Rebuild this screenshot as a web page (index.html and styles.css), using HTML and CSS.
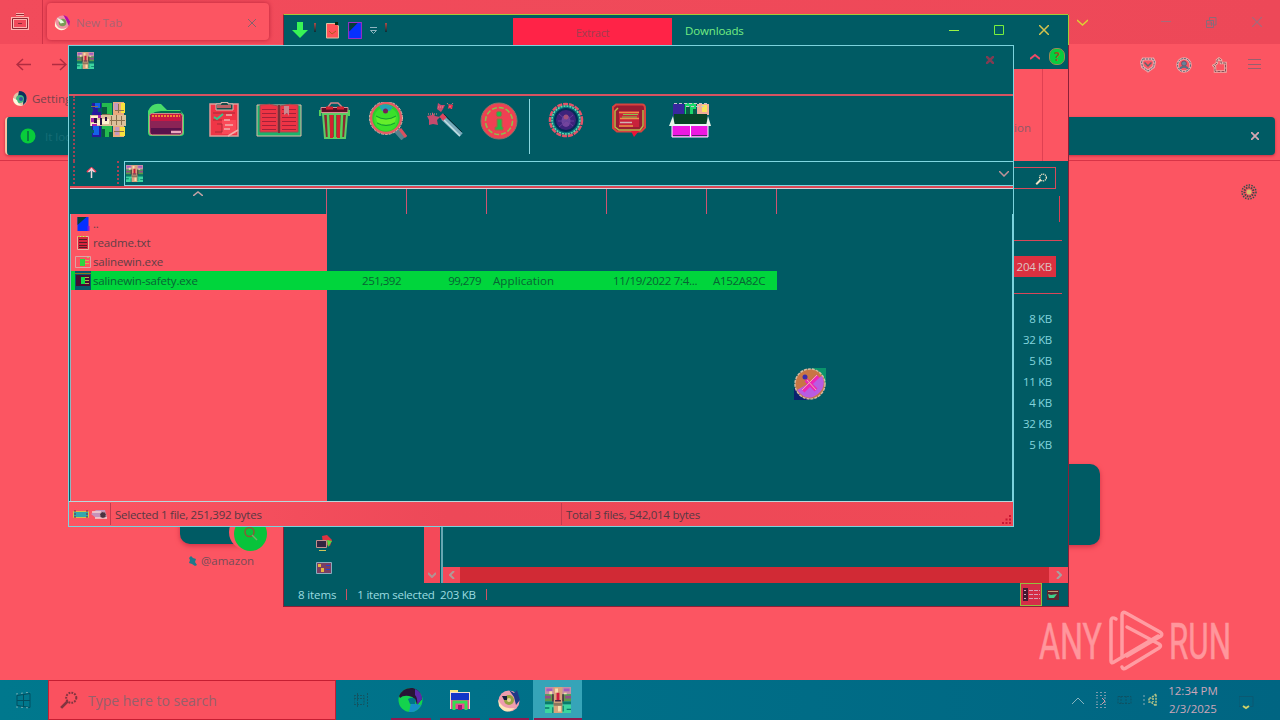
FILE: index.html
```html
<!DOCTYPE html>
<html lang="en">
  <head>
    <meta charset="UTF-8" />
    <meta name="viewport" content="width=device-width, initial-scale=1.0" />
    <title>Desktop</title>
    <link rel="stylesheet" href="styles.css">
  </head>
  <body>
    <svg class="defs" width="0" height="0">
      <symbol id="books" viewBox="0 0 18 18">
        <path fill="#c58fa5" d="M0 0h18v5H0z"/>
        <path fill="#a55ac0" d="M1 1h4v2H1zM13 1h4v2h-4z"/>
        <path fill="#5c9b48" d="M0 5h18v5H0z"/>
        <path fill="#934c8b" d="M0 6h4v2H0zM14 6h4v2h-4z"/>
        <path fill="#3dd69f" d="M0 12h18v6H0z"/>
        <path fill="#087a69" d="M0 10h18v2H0zM0 14h3v1H0zM5 14h1v4H5zM12 13h1v4h-1zM15 15h3v1h-3z"/>
        <path fill="#d9a27c" d="M6 0h6v18H6z"/>
        <path fill="#f6dcae" d="M7 1h2v3H7zM9 13h2v4H9zM3 3h2v2H3zM13 4h2v1h-2z"/>
        <path fill="#8b7760" d="M6 11h6v2H6z"/>
        <path fill="#ce183f" d="M8 4h2v5H8z"/>
        <path fill="#4a2445" d="M5 5h1v5H5zM12 5h1v5h-1zM7 9h4v1H7z"/>
      </symbol>
      <symbol id="fox" viewBox="0 0 18 18">
        <circle cx="9" cy="9" r="7.500" fill="#ef91a4"/>
        <path fill="#fff5da" d="M1 6c1 9 7 12 13 8-3 4-9 5-13-1z"/>
        <path fill="#b60ca6" d="M10 1l4 2 3 5-1 5-3-6z"/>
        <circle cx="9" cy="9" r="4" fill="#7b9b55"/>
        <path fill="#e5ffe0" d="M3 4l5 2 3 3-4 1z"/>
      </symbol>
      <symbol id="updir" viewBox="0 0 13 16">
        <path fill="#0630ff" d="M1 1h11v14H1z"/>
        <path fill="#084238" d="M1 1h9L1 9z"/>
        <path fill="#7e18e0" d="M11 10h2v5h-2z"/>
      </symbol>
      <symbol id="magnifier" viewBox="0 0 16 16">
        <circle cx="10" cy="6" r="4.500" fill="none" stroke="currentColor" stroke-width="1.800" stroke-dasharray="1.600 1"/>
        <path class="handle" stroke="currentColor" stroke-width="2.500" d="M7 9l-6 6"/>
      </symbol>
    </svg>

    <div class="desktop">
      <div class="browser">
        <div class="tab-strip">
          <div class="workspaces">
            <svg width="20" height="18" viewBox="0 0 20 18" fill="none">
              <path stroke="#ffb3b0" stroke-width="3" d="M6 1.500h8M2.500 5.500h15v10h-15z"/>
              <path stroke="#8d2833" d="M6 1.500h8M2.500 5.500h15v10h-15zM8 10.500h4"/>
            </svg>
          </div>
          <div class="tab">
            <svg width="17" height="17"><use href="#fox"/></svg>
            <span>New Tab</span>
            <svg class="tab-close" width="8" height="8" stroke="#86616b"><path d="M0 0l8 8M8 0L0 8"/></svg>
          </div>
          <div class="browser-controls">
            <svg class="list-tabs" width="11" height="7" fill="none" stroke="#ded034" stroke-width="1.500"><path d="M0 1l5.500 5L11 1"/></svg>
            <svg width="10" height="10" stroke="#a76b7a"><path d="M0 4.500h10"/></svg>
            <svg width="11" height="11" fill="none" stroke="#8b6a79"><path d="M.5 3.500h7v7h-7zM3.500 3V.5h6.500V8H8M3.500 5h2v4M1 7h6"/></svg>
            <svg width="10" height="10" stroke="#a26b7c" stroke-width="1.200"><path d="M0 0l10 10M10 0L0 10"/></svg>
          </div>
        </div>
        <div class="nav-bar">
          <svg width="15" height="13" fill="none" stroke="#b12c40" stroke-width="1.500"><path d="M15 6.500H1M7 1L1 6.500 7 12"/></svg>
          <svg class="forward" width="15" height="13" fill="none" stroke="#b12c40" stroke-width="1.500"><path d="M0 6.500h14M8 1l6 5.500L8 12"/></svg>
          <div class="nav-tools">
            <svg width="16" height="16" viewBox="0 0 16 16" fill="none"><path stroke="#eaa6aa" stroke-width="3" d="M3 2h10l1.500 3-1 5L8 14l-5.500-4-1-5z"/><path stroke="#566c76" stroke-dasharray="2 1" d="M3 2h10l1.500 3-1 5L8 14l-5.500-4-1-5z"/><path stroke="#60646d" stroke-width="1.500" d="M4.500 5.500L8 9l3.500-3.500"/></svg>
            <svg width="16" height="16" viewBox="0 0 16 16" fill="none"><circle cx="8" cy="8" r="6.500" stroke="#eba9aa" stroke-width="2.500"/><circle cx="8" cy="8" r="6.500" stroke="#536878" stroke-dasharray="2 1"/><circle cx="8" cy="6.500" r="2.500" fill="#63839a" stroke="#7a5268"/><path stroke="#5c6e83" stroke-width="2" d="M4 12c1-3 7-3 8 0"/></svg>
            <svg width="16" height="16" viewBox="0 0 16 16" fill="none"><path stroke="#e8b0a8" stroke-width="2.500" d="M3 14.500V10L1.500 8.500 4 7l1-1V3l2-1.500L9 3v3h4.500v8.500z"/><path stroke="#8a4e58" stroke-dasharray="3 1" d="M3 14.500V10L1.500 8.500 4 7l1-1V3l2-1.500L9 3v3h4.500v8.500z"/></svg>
            <svg width="13" height="11" stroke="#96606f"><path d="M0 .5h13M0 5.500h13M0 9.500h13"/></svg>
          </div>
        </div>
        <div class="bookmarks">
          <svg width="16" height="16" viewBox="0 0 16 16"><circle cx="8" cy="8" r="7" fill="#e3c3a6"/><path fill="#0c315d" d="M7 0c7 0 9 6 7 11l-3 3c1-6-1-8-5-9z"/><circle cx="8" cy="8" r="4" fill="#43b77f"/><path fill="#fff8dd" d="M1 7c0 5 4 9 10 7-4 0-5-2-6-5z"/><circle cx="9" cy="8" r="2" fill="#3556a0"/></svg>
          <span>Getting Started</span>
        </div>
        <div class="notice">
          <svg width="16" height="16"><circle cx="8" cy="8" r="7.500" fill="#08cc3b"/><path stroke="#076a43" stroke-width="1.500" d="M8 3v10"/></svg>
          <span>It looks like</span>
          <svg class="notice-close" width="8" height="8" stroke="#d4a7b2" stroke-width="1.800"><path d="M0 0l8 8M8 0L0 8"/></svg>
        </div>
        <div class="page">
          <svg class="settings" width="16" height="16" viewBox="0 0 16 16" fill="none"><circle cx="8" cy="8" r="7" stroke="#32504b" stroke-width="1.500" stroke-dasharray="1.500 1.200"/><circle cx="8" cy="8" r="4.500" stroke="#454545" stroke-width="2" stroke-dasharray="1.500 1"/><circle cx="8" cy="8" r="2.500" fill="#d7bd6c"/></svg>
          <div class="tile shortcut">
            <div class="tile-badge"><svg width="16" height="16" fill="none" stroke="#8a5a36" stroke-width="1.500"><circle cx="6.500" cy="6" r="4.500"/><path stroke="#7aa96c" d="M9 9l5 5"/></svg></div>
          </div>
          <div class="shortcut-label">
            <svg width="9" height="10"><path fill="#21798a" d="M3 0l2 2 3 1-1 3 2 3-2 1-3-2-3-1 1-3-1-2z"/></svg>
            <span>@amazon</span>
          </div>
          <div class="tile sponsor"></div>
        </div>
      </div>

      <div class="window explorer">
        <div class="explorer-title">
          <svg width="16" height="17" fill="#38f455"><path d="M5 0h6v8h5l-8 8-8-8h5z"/></svg>
          <i class="tick"></i>
          <svg class="quick-file" width="13" height="17"><path fill="#ff5257" stroke="#dfc3a0" d="M.5 1.500H10L12.500 4v12H.5z"/><path stroke="#b35a20" fill="none" d="M3 9l3 3 4-3"/><path fill="#08270f" d="M9 0h3v3H9z"/></svg>
          <svg class="quick-updir" width="14" height="17" viewBox="0 0 13 16"><path fill="#0630ff" stroke="#9c2ec5" d="M.5.500h12v15H.5z"/><path fill="#073c37" d="M1 1h8L1 9z"/></svg>
          <svg class="quick-more" width="7" height="7" fill="none" stroke="#8fb5c0"><path d="M0 .5h7M.5 3.500h6l-3 3z"/></svg>
          <i class="tick"></i>
          <div class="context-tab">Extract</div>
          <span class="explorer-name">Downloads</span>
          <div class="window-controls">
            <svg width="10" height="10" stroke="#9df444"><path d="M0 5.500h10"/></svg>
            <svg width="10" height="10" fill="none" stroke="#79ef3c"><path d="M.5.500h9v9h-9z"/></svg>
            <svg width="10" height="10" stroke="#d6c34c" stroke-width="1.500"><path d="M0 0l10 10M10 0L0 10"/></svg>
          </div>
        </div>
        <div class="ribbon-tabs">
          <svg width="10" height="8" fill="none" stroke="#ee4968" stroke-width="2"><path d="M0 6l5-4 5 4"/></svg>
          <div class="help">?</div>
        </div>
        <div class="ribbon"><span>Location</span></div>
        <div class="address-row">
          <div class="search-box"><svg width="13" height="12"><use href="#magnifier"/></svg></div>
        </div>
        <div class="explorer-body">
          <div class="nav-pane">
            <svg width="17" height="17"><path fill="#df3240" d="M6 1l5-1 5 5-2 6-7-2z"/><path fill="#52dc41" d="M11 5l5 1-4 6z"/><path fill="#332541" stroke="#c6908d" d="M.5 5.500h10v7H.5z"/><path stroke="#cfc55a" d="M3 15.500h7"/></svg>
            <svg width="16" height="12"><path fill="#7a3e62" stroke="#8cacbd" d="M.5.500h15v11H.5z"/><path fill="#e7b43e" d="M2 2h3v3H2zM5 6h3v4H5z"/><path stroke="#2740d0" d="M10 3.500h4M10 7.500h4"/></svg>
          </div>
          <div class="nav-scroll"><svg width="8" height="6" fill="none" stroke="#b29293" stroke-width="2"><path d="M0 1l4 4 4-4"/></svg></div>
          <div class="files">
            <div class="files-header"></div>
            <div class="group-line"></div>
            <div class="file selected">204 KB</div>
            <div class="group-line second"></div>
            <div class="file">8 KB</div>
            <div class="file">32 KB</div>
            <div class="file">5 KB</div>
            <div class="file">11 KB</div>
            <div class="file">4 KB</div>
            <div class="file">32 KB</div>
            <div class="file">5 KB</div>
            <div class="files-scroll">
              <div class="arrow"><svg width="6" height="8" fill="none" stroke="#b09a98" stroke-width="2"><path d="M5 0L1 4l4 4"/></svg></div>
              <div class="arrow right"><svg width="6" height="8" fill="none" stroke="#a7a0a0" stroke-width="2"><path d="M1 0l4 4-4 4"/></svg></div>
            </div>
          </div>
        </div>
        <div class="explorer-status">
          <span class="count">8 items</span>
          <i></i>
          <span class="chosen">1 item selected&nbsp; 203 KB</span>
          <i></i>
          <div class="views">
            <div class="view active"><svg width="17" height="13"><path fill="#441a32" d="M0 0h5v13H0z"/><path stroke="#d7a1bb" stroke-dasharray="4 1" d="M6 2.500h11M6 6.500h11M6 10.500h11M1 2.500h2M1 6.500h2M1 10.500h2"/></svg></div>
            <div class="view"><svg width="12" height="10"><path fill="#5c2530" d="M0 0h12v10H0z"/><path stroke="#bf9e74" d="M1 1.500h10"/><path fill="#3ed18b" d="M1 4l3 1 6-1-3 4H2z"/></svg></div>
          </div>
        </div>
      </div>

      <div class="window archive">
        <div class="archive-title">
          <svg width="17" height="17"><use href="#books"/></svg>
          <svg class="archive-close" width="8" height="8" stroke="#803c52" stroke-width="2.500"><path d="M0 0l8 8M8 0L0 8"/></svg>
        </div>
        <div class="tools">
          <svg width="36" height="36" viewBox="0 0 36 36"><path fill="#26189e" d="M2 1h9v34H2z"/><path fill="#1462e8" d="M5 1h5v5H5zM3 24h6v9H3z"/><path fill="#075a64" d="M1 6h2v4H1zM8 6h3v4H8zM1 28h3v3H1z"/><path fill="#24ba4e" d="M12 1h10v34H12z"/><path fill="#075a3e" d="M12 5h5v7h-5zM12 27h3v8h-3zM19 30h4v5h-4z"/><path fill="#e9a97d" d="M23 0h11v35H23z"/><path fill="#c49ac0" d="M24 1h5v7h-5zM25 25h4v8h-4z"/><path fill="#f9e23c" d="M31 1h4v10h-4zM30 25h5v9h-5z"/><path fill="#ddc09a" d="M0 13h36v11H0z"/><path fill="#fff2ce" d="M1 14h9v2H1zM7 18h3v5H7zM12 17h7v5h-7zM1 21h5v3H1z"/><path fill="#a821ae" d="M1 16h3v4H1zM8 13h3v3H8zM2 22h5v2H2z"/><path fill="#2c1245" d="M4 16h3v5H4zM10 16h2v7h-2zM15 15h2v4h-2z"/><path fill="none" stroke="#8a704f" d="M21.500 14v9M26.500 13v10M31.500 14v9M20 18.500h15M1 4.500h7M12 12.500h8M25 8.500h9M24 29.500h10M28.500 2v9"/></svg>
          <svg width="38" height="36" viewBox="0 0 38 36"><path fill="#49dc69" d="M1 9q4-9 13-7l6 6h13l4 5v18q0 3-4 3H4q-3 0-3-4z"/><path fill="#07694f" d="M14 9h20l1 4H3l5-3z"/><path fill="#8b2456" stroke="#d08b88" d="M2.500 13.500q0-2 3-2h27q3 0 3 3V30q0 3-3 3h-27q-3 0-3-3z"/><path fill="#c71844" d="M4 12h30v7H4z"/><path stroke="#ffb12b" stroke-width="1.500" stroke-dasharray="2 1" d="M5 14h28"/><path fill="#59124b" d="M4 26h30v6H4z"/><path stroke="#eda8be" stroke-width="2.500" d="M24 30h10"/></svg>
          <svg width="30" height="36" viewBox="0 0 30 36"><path fill="#ef3546" stroke="#df9c99" stroke-width="1.500" d="M1 2h28v32H1z"/><path fill="#fa4a58" d="M13 18h14v14H13z"/><path fill="#174c4b" stroke="#d4bbb2" d="M7 2h5V.5h7V2h5v6H7z"/><path fill="#ba6065" d="M8 3h14v3H8z"/><path fill="none" stroke="#a92b36" d="M4 11h22M4 18h9M8 22h5v8H6"/><path stroke="#36c78b" stroke-width="2" fill="none" d="M5 15l3 2 6-5"/><path stroke="#f1b0ac" stroke-width="1.500" d="M17 13h6M15 18h6M16 23h8M15 27h6M19 34l10-6"/></svg>
          <svg width="46" height="36" viewBox="0 0 46 36"><path fill="#19b36c" stroke="#e4bba5" d="M1 3h44v31H1z"/><path fill="#ee3445" stroke="#9a4c50" d="M4 3q10-2 18 1v26H4zM24 4q10-3 18-1v27H24z"/><path stroke="#a22239" fill="none" d="M6 7.500h14M6 11.500h14M6 15.500h14M6 19.500h14M6 23.500h14M6 27.500h14M26 7.500h14M26 11.500h14M26 15.500h14M26 19.500h14M26 23.500h14M26 27.500h14"/><path stroke="#77323a" stroke-width="2" d="M23 3v28"/><path fill="#ca8890" d="M28 4h5v10l-2-3-3 2z"/></svg>
          <svg width="31" height="38" viewBox="0 0 31 38"><path fill="none" stroke="#d28488" stroke-width="1.500" d="M9 5l3-4h7l4 4"/><path fill="#8a2730" stroke="#5ecb66" stroke-width="2" d="M4 12h24l-2 24H6z"/><path fill="#5b0e28" stroke="#da8e94" d="M2 5.500h27v5H2z"/><path stroke="#55d35a" stroke-width="2.500" d="M9 13l1 23M16 13v23M23 13l-1 23M1 8v6M30 8v6"/><path stroke="#d3212f" stroke-width="3" d="M12.500 13v23M19.500 13v23M7 6h7M18 6h7"/></svg>
          <svg width="38" height="38" viewBox="0 0 38 38"><path stroke="#58818e" stroke-width="7" d="M28 28l7 8"/><path stroke="#d9505f" stroke-width="3" d="M31 27l6 8"/><circle cx="17" cy="16" r="15" fill="#2acf2c" stroke="#e55b64" stroke-width="2.500"/><circle cx="17" cy="16" r="16.500" fill="none" stroke="#e6b4a6" stroke-dasharray="3 1"/><circle cx="17" cy="17" r="12" fill="#3be02a"/><path fill="#65ed2b" d="M7 15q10 5 20 0l-1 5q-9 5-18 0z"/><path fill="#23a2b5" d="M10 4q7-4 14 1l-3 4h-8z"/><circle cx="16.500" cy="9" r="2.500" fill="#781e58"/><path fill="none" stroke="#169a31" d="M7 14q10 6 20 0M8 21q9 5 18 0"/></svg>
          <svg width="38" height="36" viewBox="0 0 38 36"><path stroke="#7aaabb" stroke-width="5" d="M17 16l18 17"/><path stroke="#c1e0e3" stroke-width="1.500" d="M16 16l18 18"/><path stroke="#dc445d" stroke-width="5" d="M15 13l4 4"/><path stroke="#07323a" d="M18 12l18 18"/><path fill="#c64b6d" d="M6 10l3 4 5 1-3 3 1 5-5-1-4 1v-5l-2-4 5-1zM12 1l3 2h4l-2 4-2 3-4-3z"/><path fill="#ed284b" d="M23 2l4 1-1 4-4-1z"/><path stroke="#e98b89" stroke-dasharray="1 1" d="M21 1l5 6M27 1l-5 6M2 12h10M12 5h6"/></svg>
          <svg width="38" height="38" viewBox="0 0 38 38"><circle cx="19" cy="19" r="18" fill="#ef4053" stroke="#8d7364"/><circle cx="19" cy="19" r="13.500" fill="none" stroke="#8bc34c" stroke-width="1.500" stroke-dasharray="5 2"/><circle cx="19" cy="12" r="2.800" fill="#20b84c" stroke="#9d6b45"/><path fill="#24b748" stroke="#9d6b45" d="M17 17h5v8h1v3h-8v-3h2z"/></svg>
          <i class="tool-separator"></i>
          <svg width="36" height="36" viewBox="0 0 36 36"><circle cx="18" cy="18" r="16" fill="#06606a" stroke="#e35368" stroke-width="2.500" stroke-dasharray="5 1"/><circle cx="18" cy="18" r="14" fill="#06747c" stroke="#63ddb0" stroke-width="1.500" stroke-dasharray="2 1"/><circle cx="18" cy="18" r="11" fill="#3e237c" stroke="#052c58" stroke-width="2"/><ellipse cx="18" cy="19" rx="4.500" ry="6" fill="#73449d"/><path stroke="#63409a" d="M11 12l14 12M11 25l14-12M10 19h16"/><circle cx="18" cy="15" r="2.500" fill="#a3507c"/></svg>
          <svg width="36" height="36" viewBox="0 0 36 36"><path fill="#981c32" stroke="#d8423e" stroke-width="2" d="M5 2.500h26q3 0 3 4v19l-4 4H6L2 26V5z"/><path fill="none" stroke="#b3b848" stroke-width="1.500" d="M7 6L4 9v16l4 3h21l3-4V8"/><path fill="#c8213b" d="M8 9h20v16H8z"/><path stroke="#e89446" stroke-width="1.500" d="M8 10.500h20M9 16.500h19M8 24h14"/><path stroke="#86c34c" d="M12 12.500h15M11 15h15"/><path stroke="#d2b1b1" stroke-width="1.500" d="M9 20.500h12"/><path fill="#ee1438" d="M20 29h8l-5 6z"/></svg>
          <svg width="42" height="36" viewBox="0 0 42 36"><path fill="#38279e" d="M4 2h11v12H4z"/><path fill="#1ad76a" d="M16 1h11v12H16z"/><path fill="#f0ad99" d="M28 2h12v11H28z"/><path fill="#0c5c48" d="M17 5h4v8h-4zM24 7h3v6h-3z"/><path fill="#f7e55c" d="M33 3h5v7h-5z"/><path stroke="#c8c6ce" stroke-dasharray="3 2" d="M5 1.500h34M17 4.500h18"/><path fill="#074528" d="M5 12h33v10H5z"/><path fill="#ed18e2" stroke="#fff" d="M3 23h36v12H3z"/><path fill="#e9f4e8" d="M4 14L0 24h6zM39 14l3 10h-5z"/><path stroke="#e8f6f2" stroke-width="2" d="M4 23h34"/><path stroke="#fff" d="M21.500 23v12"/><path stroke="#54246b" d="M4 33.500h16M23 33.500h15"/></svg>
        </div>
        <div class="path-row">
          <div class="up"><svg width="11" height="11" fill="none"><path stroke="#e73d57" stroke-width="2" d="M1 5l4.500-4L10 5"/><path stroke="#efd6da" stroke-width="1.500" d="M5.500 1v10M2.500 5l3-3 3 3"/></svg></div>
          <div class="path-field">
            <svg width="17" height="17"><use href="#books"/></svg>
            <svg class="path-drop" width="10" height="6" fill="none" stroke="#c09298" stroke-width="1.500"><path d="M0 0l5 5 5-5"/></svg>
          </div>
        </div>
        <div class="columns">
          <div><svg width="10" height="5" fill="none" stroke="#c1a2a5" stroke-width="1.500"><path d="M0 5l5-4 5 4"/></svg></div>
          <div></div><div></div><div></div><div></div><div></div>
        </div>
        <div class="entries">
          <div class="entry">
            <svg width="14" height="16"><use href="#updir"/></svg><span>..</span>
          </div>
          <div class="entry">
            <svg width="14" height="16"><path fill="#d8243b" stroke="#e8b5a2" d="M1.500 1.500h11v13h-11z"/><path stroke="#571e28" d="M3 4.500h8M3 7.500h8M3 10.500h8M3 12.500h8"/><path stroke="#c8c72c" stroke-dasharray="2 1" d="M2 1.500h9"/></svg><span>readme.txt</span>
          </div>
          <div class="entry">
            <svg width="16" height="12"><path fill="#fa5360" stroke="#dca4a4" d="M.5.500h15v11H.5z"/><path fill="#2cd63e" d="M5 3h5v7H5z"/><path stroke="#bdbb4f" d="M10 4.500h4M10 7.500h4M12 1.500h2"/></svg><span>salinewin.exe</span>
          </div>
          <div class="entry selected">
            <div class="entry-name"><svg width="16" height="19"><path fill="#07596a" d="M0 0h16v19H0z"/><path stroke="#8b7620" d="M0 2.500h16"/><path fill="#470c33" d="M1 4h14v11H1z"/><path fill="#0ce045" d="M6 6h4v7H6z"/><path stroke="#a7b849" d="M10 6.500h4M10 9.500h4M10 12.500h4"/></svg><span>salinewin-safety.exe</span></div>
            <span class="num">251,392</span>
            <span class="num">99,279</span>
            <span class="kind">Application</span>
            <span>11/19/2022 7:4...</span>
            <span>A152A82C</span>
          </div>
        </div>
        <div class="archive-status">
          <div class="status-icons">
            <svg width="16" height="9"><path fill="#35a7ac" stroke="#d7bf4a" d="M.5 1.500h15v6H.5z"/><path stroke="#742344" stroke-dasharray="2 1" d="M2 0v9M14 0v9"/></svg>
            <svg width="17" height="11"><path fill="#c792ba" d="M0 5l5-4h9l2 8H5z"/><path stroke="#f6d1cf" stroke-width="1.500" d="M1 3h9M4 9h12"/><circle cx="12" cy="6" r="3" fill="#4b3340" stroke="#bd9d9c" stroke-dasharray="1 1"/></svg>
          </div>
          <span>Selected 1 file, 251,392 bytes</span>
          <span>Total 3 files, 542,014 bytes</span>
          <svg class="grip" width="9" height="9" fill="#c91733"><path d="M0 7h2v2H0zM3.500 7h2v2h-2zM7 7h2v2H7zM3.500 3.500h2v2h-2zM7 3.500h2v2H7zM7 0h2v2H7z"/></svg>
        </div>
      </div>

      <svg class="busy" width="32" height="32" viewBox="0 0 32 32"><path fill="#0a216f" d="M0 20h15v12H0z"/><path fill="#0b946b" d="M18 0h14v16H18z"/><circle cx="16" cy="16" r="15" fill="#c87645" stroke="#d5b9a1" stroke-width="1.500" stroke-dasharray="3 1"/><path fill="#b85ce2" d="M3 22L28 8q5 10-4 18-11 9-21-4z"/><path stroke="#ed27b6" stroke-width="4" d="M9 23L24 8M12 12l10 10"/><path stroke="#eab1ac" d="M8 22L23 7M13 12l9 10"/><circle cx="11" cy="9" r="2.500" fill="#3a2bad"/></svg>

      <svg class="watermark" width="210" height="64" viewBox="0 0 210 64">
        <text x="1" y="49" textLength="63" lengthAdjust="spacingAndGlyphs">ANY</text>
        <g fill="none" stroke="#ff9ca2" stroke-width="3.500" stroke-linejoin="round" stroke-linecap="round">
          <path d="M78 9q-5-3-5 2v40q0 3 3 1l44-26"/>
          <path d="M84 46V5q0-4 4-2l34 19q3 2 1 4L89 46"/>
          <path d="M89 17l32 17q3 2 0 4L88 58q-3 2-4-1"/>
        </g>
        <text x="131" y="49" textLength="62" lengthAdjust="spacingAndGlyphs">RUN</text>
      </svg>

      <div class="taskbar">
        <div class="start"><svg width="15" height="17" fill="none"><path stroke="#024f60" d="M1 3.500l13-2v14L1 13.500zM7.500 2v13M1 8.500h13"/><path stroke="#72aab0" stroke-dasharray="2 3" d="M0 2l15-2M0 15l15 1"/></svg></div>
        <div class="task-search"><svg width="18" height="18"><use href="#magnifier"/></svg><span>Type here to search</span></div>
        <div class="task task-view"><svg width="15" height="14" fill="none" stroke="#125462"><path stroke-dasharray="2 1" d="M0 2.500h10v9H0zM13.500 0v14M0 5.500h10M3.500 0v14"/></svg></div>
        <div class="task running"><svg width="25" height="26" viewBox="0 0 25 26"><circle cx="12.500" cy="13" r="12" fill="#14d34d"/><path fill="#291436" d="M1 9Q5 0 15 1q8 2 9 11l-5 6q-1-8-8-9-6-1-9 2z"/><path fill="#5a29ab" d="M17 2q7 3 7 10l-5 6q1-7-2-10z"/><path fill="#158fc8" d="M13 16l10 2q-4 8-12 7z"/><path fill="#01748a" d="M10 12q5-3 8 1l-1 4h-5z"/></svg></div>
        <div class="task running"><svg width="22" height="21" viewBox="0 0 22 21"><path fill="#f5e77c" d="M1 0h8v4H1z"/><path fill="#f0dfce" d="M1 2h20v17H1z"/><path fill="#1236c8" d="M2 3h18v7H2z"/><path fill="#ee4993" d="M2 10h18v9H2z"/><path fill="none" stroke="#38dc51" stroke-width="3" d="M5 20v-8h12v8"/><path fill="#a0136f" d="M9 15h4v5H9z"/></svg></div>
        <div class="task running"><svg width="24" height="24" viewBox="0 0 24 24"><circle cx="12" cy="13" r="10.500" fill="#ef9dae"/><path fill="#ffe5b7" d="M1 11q4 11 17 9-9 8-16-2z"/><path fill="#203986" d="M12 2l5 3 3-3 3 10-4 5-2-8z"/><circle cx="12" cy="12" r="5" fill="#94a23e"/><path fill="#121e3c" d="M5 8h5v4H7z"/><circle cx="12" cy="12" r="2" fill="#efd19e"/></svg></div>
        <div class="task running current"><svg width="26" height="26"><use href="#books"/></svg></div>
        <div class="tray">
          <svg width="12" height="7" fill="none" stroke="#87b4c0"><path d="M0 7l6-6 6 6"/></svg>
          <svg width="12" height="18" fill="none"><path stroke="#7a9bae" stroke-dasharray="2 2" d="M1 1.500h10M1 4.500h10M1 13.500h10M1 16.500h10M2 6v7M10 6v7"/><path stroke="#d79ba7" d="M7 7l3 3-3 3"/></svg>
          <svg width="16" height="12" fill="none" stroke="#0c5365"><path stroke-dasharray="2 1" d="M1 2.500h13v7H1zM4 2v8M9 2v8"/></svg>
          <svg width="14" height="14" fill="none"><path stroke="#b7c587" stroke-width="1.500" stroke-dasharray="2 1" d="M13 1L8 5H6v4h2l5 4zM10 5v4"/><path stroke="#88abb6" stroke-dasharray="2 2" d="M1 2v10"/></svg>
          <div class="clock"><span>12:34 PM</span><span>2/3/2025</span></div>
          <svg class="bell" width="15" height="16" fill="none"><path stroke="#0b5972" d="M0 1.500h14v10H0z"/><path stroke="#ced36a" stroke-width="2" d="M4 11l3 2 3-2"/></svg>
        </div>
      </div>
    </div>
  </body>
</html>
```
FILE: styles.css
```css
* {
  box-sizing: border-box;
}

body {
  margin: 0;
  overflow: hidden;
  font-family: "Open Sans", "Noto Sans", sans-serif;
  font-size: 11.5px;
}

svg {
  display: block;
  flex: none;
}

.defs {
  position: absolute;
}

.desktop {
  position: relative;
  width: 1280px;
  height: 720px;
  overflow: hidden;
  background: #fc5562;
}

/* browser in the background */
.browser {
  display: flex;
  flex-direction: column;
  height: 680px;
}

.tab-strip {
  display: flex;
  height: 44px;
  background: linear-gradient(90deg, #f24b5b, #ed4858);
}

.workspaces {
  width: 43px;
  padding: 13px 0 0 10px;
  border-right: 1px solid #d03448;
}

.tab {
  display: flex;
  align-items: center;
  width: 222px;
  height: 37px;
  margin: 3px 0 0 4px;
  padding: 2px 13px 0 7px;
  gap: 5px;
  border-radius: 4px;
  background: #fc5562;
  box-shadow: 0 0 4px #b92439;
  color: #a96472;
  letter-spacing: -0.1px;
}

.tab-close {
  margin-left: auto;
}

.browser-controls {
  display: flex;
  align-items: center;
  margin-left: auto;
  padding-right: 18px;
  gap: 35px;
}

.list-tabs {
  margin-right: 38px;
}

.nav-bar {
  display: flex;
  align-items: center;
  height: 41px;
  padding: 0 19px 0 16px;
}

.forward {
  margin-left: 21px;
}

.nav-tools {
  display: flex;
  align-items: center;
  margin-left: auto;
  gap: 20px;
}

.bookmarks {
  display: flex;
  align-items: center;
  height: 27px;
  padding-left: 12px;
  gap: 4px;
  color: #77434c;
}

.notice {
  display: flex;
  align-items: center;
  height: 38px;
  margin: 5px 5px 5px 5px;
  padding: 0 16px 0 13px;
  gap: 9px;
  border-left: 2px solid #f3c5a5;
  border-radius: 4px;
  background: #005b64;
  box-shadow: 0 1px 3px #c62d41;
  color: #176d76;
}

.notice-close {
  margin-left: auto;
}

.page {
  flex: 1;
  position: relative;
  border-top: 1px solid #d73447;
}

.settings {
  position: absolute;
  top: 23px;
  right: 23px;
}

.tile {
  position: absolute;
  height: 81px;
  border-radius: 10px;
  background: #005b64;
  box-shadow: 0 2px 5px #d13447;
}

.shortcut {
  left: 180px;
  top: 302px;
  width: 82px;
}

.tile-badge {
  position: absolute;
  right: -5px;
  bottom: -7px;
  display: flex;
  align-items: center;
  justify-content: center;
  width: 33px;
  height: 34px;
  border-radius: 50%;
  background: #09c33b;
  box-shadow: -4px -2px 0 1px #fc5562;
}

.shortcut-label {
  position: absolute;
  left: 188px;
  top: 392px;
  display: flex;
  align-items: center;
  gap: 4px;
  color: #744c57;
}

.sponsor {
  left: 1018px;
  top: 303px;
  width: 82px;
}

/* windows */
.window {
  position: absolute;
  display: flex;
  flex-direction: column;
  background: #005b64;
}

.explorer {
  left: 283px;
  top: 14px;
  width: 786px;
  height: 593px;
  border: 1px solid #8b1f38;
  border-top-color: #a4ca36;
}

.explorer-title {
  display: flex;
  align-items: center;
  height: 30px;
  margin-right: -1px;
  padding-left: 8px;
  border-right: 1px solid #a4ca36;
}

.tick {
  width: 2px;
  height: 9px;
  margin: -6px 10px 0 6px;
  background: linear-gradient(#ae4d48, #063038);
}

.quick-file {
  margin-right: 9px;
}

.quick-updir {
  margin-right: 8px;
}

.quick-more + .tick {
  margin-left: 8px;
}

.context-tab {
  width: 159px;
  height: 27px;
  margin: 3px 13px 0 auto;
  padding-top: 7px;
  background: #ff2347;
  color: #a13d4f;
  font-size: 11px;
  letter-spacing: -0.3px;
  text-align: center;
}

.explorer-name {
  width: 264px;
  color: #75ee81;
  letter-spacing: -0.15px;
}

.window-controls {
  display: flex;
  gap: 35px;
  padding-right: 19px;
}

.ribbon-tabs {
  display: flex;
  align-items: center;
  justify-content: flex-end;
  height: 24px;
  gap: 9px;
  padding: 0 3px 1px 0;
}

.help {
  width: 16px;
  height: 17px;
  border: 1px solid #9c8955;
  border-radius: 7px;
  background: #08cd3e;
  color: #97551f;
  font-weight: bold;
  line-height: 15px;
  text-align: center;
}

.ribbon {
  height: 92px;
  padding: 51px 37px 0 0;
  background: linear-gradient(90deg, transparent 758px, #df4052 758px, #df4052 759px, transparent 759px), #fc5562;
  color: #8f5967;
  text-align: right;
}

.address-row {
  display: flex;
  justify-content: flex-end;
  height: 34px;
  padding: 6px 12px 0 0;
}

.search-box {
  width: 150px;
  height: 22px;
  padding: 5px 7px 0 0;
  border: 1px solid #d84b5c;
  color: #f0e3c5;
}

.search-box svg {
  margin-left: auto;
}

.explorer-body {
  display: flex;
  flex: 1;
  min-height: 0;
}

.nav-pane {
  display: flex;
  flex-direction: column;
  justify-content: flex-end;
  width: 140px;
  padding: 0 0 9px 32px;
  gap: 10px;
}

.nav-scroll {
  display: flex;
  align-items: flex-end;
  justify-content: center;
  width: 16px;
  padding-bottom: 5px;
  background: #f44959;
}

.files {
  display: flex;
  flex: 1;
  flex-direction: column;
  align-items: flex-end;
  margin-left: 1px;
  border-left: 2px solid #66a7b2;
}

.files-header {
  width: 8px;
  height: 26px;
  margin: 1px 8px 18px 0;
  border-right: 1px solid #d84255;
}

.group-line {
  width: 590px;
  height: 1px;
  margin-right: 6px;
  background: #d84759;
}

.group-line.second {
  margin: 16px 6px 14px 0;
}

.file {
  width: 580px;
  height: 21px;
  margin-right: 12px;
  padding-right: 4px;
  color: #83d4dd;
  letter-spacing: -0.3px;
  line-height: 21px;
  text-align: right;
}

.file.selected {
  margin-top: 15px;
  background: #dc3040;
  color: #dcc4c4;
}

.files-scroll {
  display: flex;
  justify-content: space-between;
  width: 100%;
  height: 16px;
  margin-top: auto;
  background: #d12a35;
}

.arrow {
  display: flex;
  align-items: center;
  justify-content: center;
  width: 17px;
  background: #f44959;
}

.arrow.right {
  width: 19px;
}

.explorer-status {
  display: flex;
  align-items: center;
  height: 23px;
  padding-left: 14px;
  color: #9bdbe0;
  letter-spacing: -0.12px;
}

.explorer-status i {
  width: 1px;
  height: 11px;
  margin: 0 10px;
  background: #cd5364;
}

.explorer-status .chosen {
  letter-spacing: -0.25px;
}

.views {
  display: flex;
  align-self: stretch;
  margin-left: auto;
  padding-right: 4px;
}

.view {
  display: flex;
  align-items: center;
  justify-content: center;
  width: 22px;
}

.view.active {
  border: 1px solid #93be40;
  background: #d52d48;
}

.archive {
  left: 68px;
  top: 45px;
  width: 946px;
  height: 482px;
  border: 1px solid #7bd3dd;
}

.archive-title {
  display: flex;
  justify-content: space-between;
  height: 50px;
  padding: 6px 19px 0 8px;
  border-bottom: 2px solid #d65361;
}

.archive-close {
  margin-top: 4px;
}

.tools {
  display: grid;
  grid-template-columns: 57px 59px 57px 54px 56px 52px 61px 47px 14px 60px 65px 58px;
  justify-items: center;
  height: 65px;
  margin-left: 4px;
  padding: 6px 0 0 4px;
  border-left: 2px dotted #9d4454;
}

.tool-separator {
  width: 1px;
  height: 55px;
  margin-top: -3px;
  background: #8bd7df;
}

.path-row {
  display: flex;
  height: 27px;
  margin-left: 4px;
  border-left: 2px dotted #9d4454;
}

.up {
  width: 44px;
  margin-right: 5px;
  padding: 6px 0 0 11px;
  border-right: 2px dotted #ab4254;
}

.path-field {
  display: flex;
  align-items: center;
  flex: 1;
  height: 25px;
  padding: 0 4px 0 1px;
  border: 1px solid #80d7e1;
  border-right: 0;
}

.path-drop {
  margin-left: auto;
}

.columns {
  display: grid;
  grid-template-columns: 257px 80px 80px 120px 100px 70px;
  height: 26px;
  margin-left: 1px;
  border-top: 1px solid #d5d3dc;
  box-shadow: 0 -2px #dc4855;
}

.columns div {
  height: 25px;
  border-right: 1px solid #cf5373;
}

.columns svg {
  margin: 2px auto;
}

.entries {
  flex: 1;
  margin-left: 1px;
  border-left: 1px solid #8eb7c0;
  border-right: 1px solid #7bd3dd;
  background: linear-gradient(90deg, #fc5562 256px, #005b64 256px);
}

.entry {
  display: flex;
  align-items: center;
  width: 256px;
  height: 19px;
  padding-left: 4px;
  gap: 2px;
  color: #613f46;
  letter-spacing: -0.15px;
}

.entry svg[width="14"] {
  margin: 0 1px;
}

.entry.selected {
  display: grid;
  grid-template-columns: 252px 80px 80px 120px 100px 70px;
  gap: 0;
  width: 706px;
  background: #00d53c;
  color: #086334;
}

.entry.selected > span {
  padding-left: 6px;
  letter-spacing: -0.3px;
  white-space: nowrap;
}

.entry.selected .num {
  padding-right: 6px;
  letter-spacing: -0.5px;
  text-align: right;
}

.entry.selected .kind {
  letter-spacing: 0.1px;
}

.entry-name {
  display: flex;
  align-items: center;
  gap: 2px;
}

.archive-status {
  display: grid;
  grid-template-columns: 41px 451px 1fr 9px;
  align-items: center;
  height: 25px;
  padding-right: 2px;
  border-top: 1px solid #b9d8dc;
  background: linear-gradient(90deg, #fc5562, #ed4858 40%, #ef4956);
  color: #583943;
  letter-spacing: -0.25px;
}

.archive-status > span {
  padding: 1px 0 0 4px;
  border-left: 1px solid #c33c4e;
  line-height: 21px;
}

.status-icons {
  display: flex;
  align-items: center;
  padding-left: 4px;
  gap: 2px;
}

.grip {
  align-self: end;
  margin-bottom: 2px;
}

.busy {
  position: absolute;
  left: 794px;
  top: 368px;
}

.watermark {
  position: absolute;
  left: 1038px;
  top: 610px;
}

.watermark text {
  fill: #ff969c;
  stroke: #ff969c;
  stroke-width: 0.6px;
  font-family: Roboto, sans-serif;
  font-size: 50px;
}

.taskbar {
  position: absolute;
  left: 0;
  bottom: 0;
  display: flex;
  width: 1280px;
  height: 40px;
  background: linear-gradient(90deg, #00788d, #006582);
}

.start {
  width: 48px;
  padding: 12px 0 0 16px;
}

.task-search {
  display: flex;
  align-items: center;
  width: 288px;
  margin-right: 1px;
  padding-left: 11px;
  gap: 10px;
  border: 1px solid #c51e32;
  background: #fa515f;
  color: #96606b;
  font-size: 14px;
}

.task-search svg {
  color: #823540;
}

.task {
  display: flex;
  align-items: center;
  justify-content: center;
  width: 49px;
}

.task.running {
  background: linear-gradient(#8e1b50, #8e1b50) center bottom / 40px 2px no-repeat;
}

.task.current {
  background: linear-gradient(#8e1b50, #8e1b50) center bottom / 48px 2px no-repeat, #36a4b8;
}

.tray {
  display: flex;
  align-items: center;
  margin-left: auto;
  padding-right: 26px;
  gap: 10px;
}

.tray svg:first-child {
  margin-right: 1px;
}

.clock {
  display: flex;
  flex-direction: column;
  width: 52px;
  color: #cda6b9;
  font-size: 11.5px;
  line-height: 18px;
  text-align: center;
  white-space: nowrap;
}

.bell {
  margin: 6px 0 0 10px;
}
```
